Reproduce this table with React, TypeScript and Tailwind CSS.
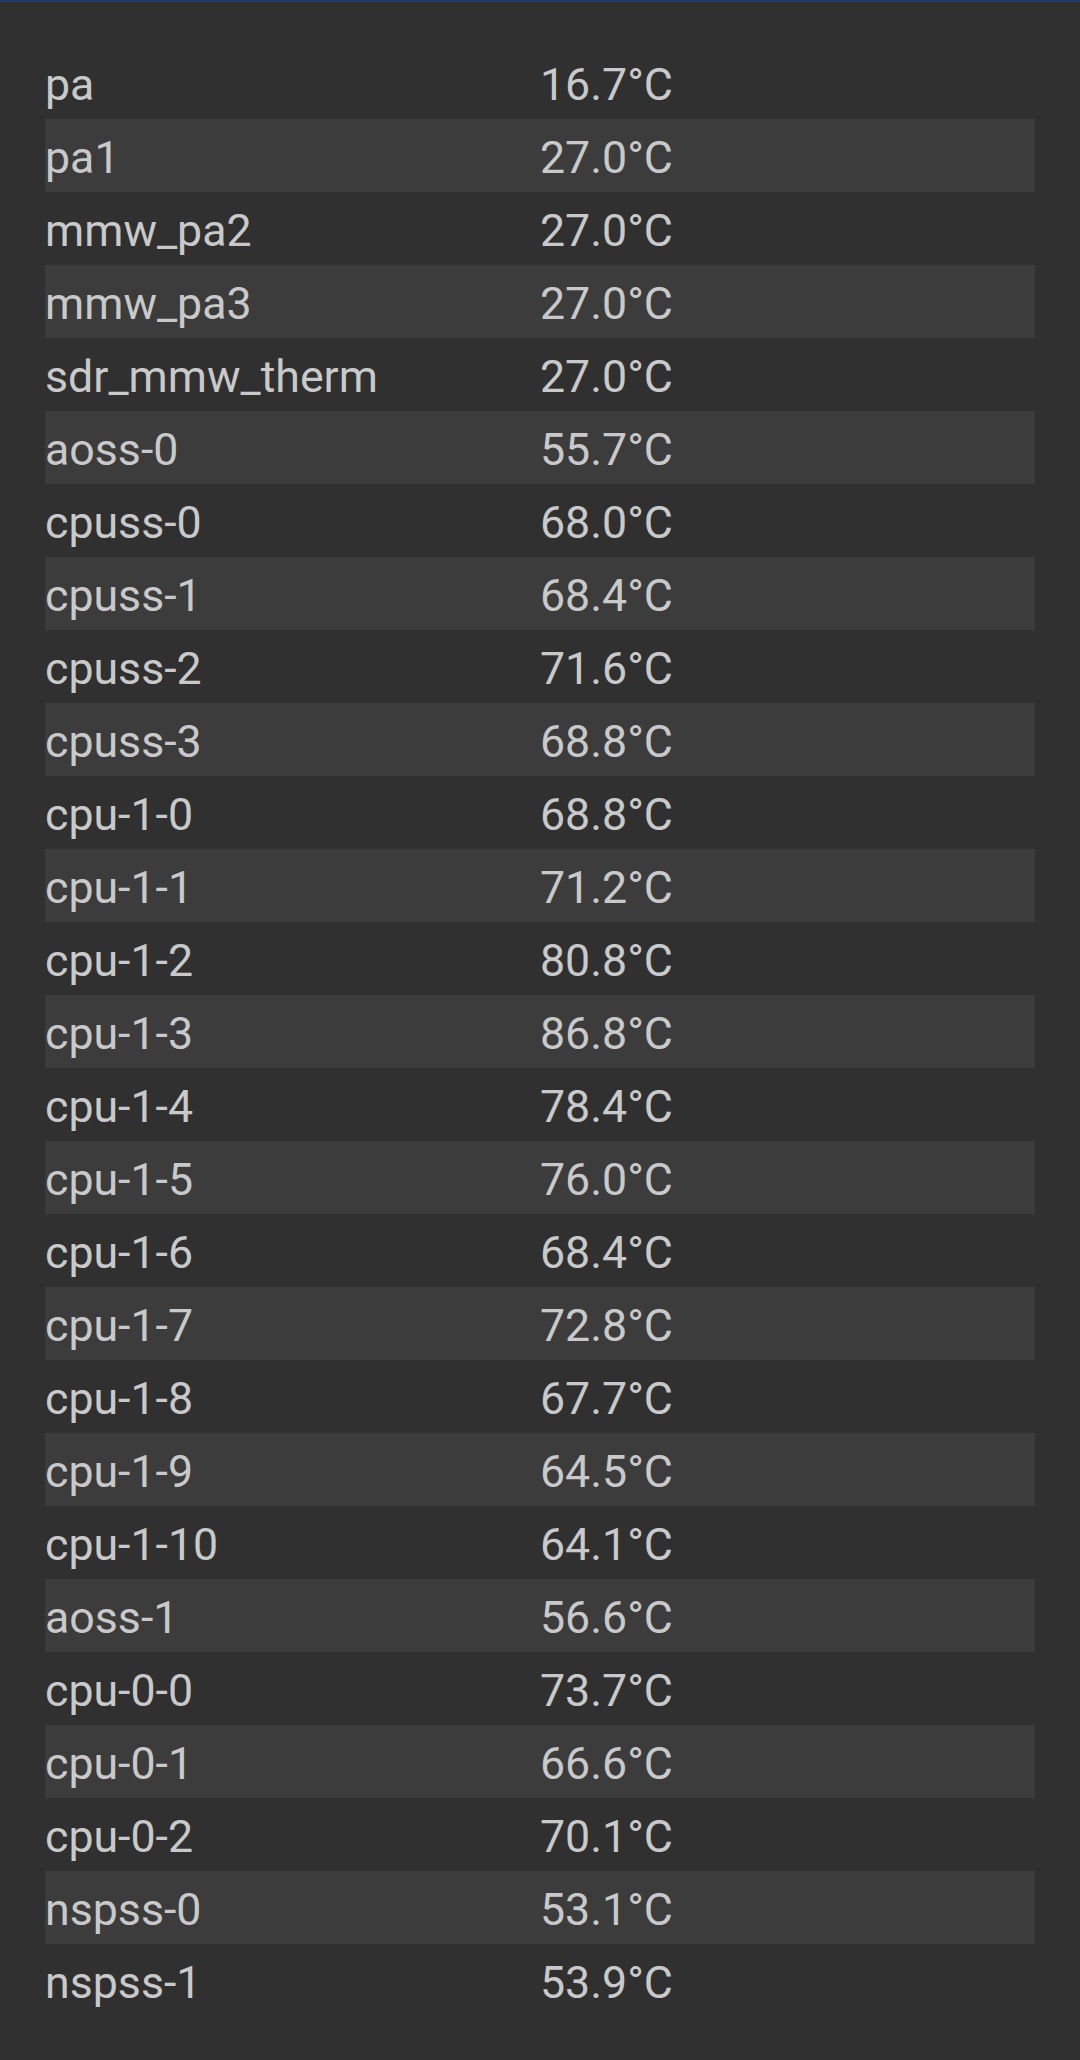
import React from "react";

const sensors: [string, string][] = [
   ["pa", "16.7°C"],
   ["pa1", "27.0°C"],
   ["mmw_pa2", "27.0°C"],
   ["mmw_pa3", "27.0°C"],
   ["sdr_mmw_therm", "27.0°C"],
   ["aoss-0", "55.7°C"],
   ["cpuss-0", "68.0°C"],
   ["cpuss-1", "68.4°C"],
   ["cpuss-2", "71.6°C"],
   ["cpuss-3", "68.8°C"],
   ["cpu-1-0", "68.8°C"],
   ["cpu-1-1", "71.2°C"],
   ["cpu-1-2", "80.8°C"],
   ["cpu-1-3", "86.8°C"],
   ["cpu-1-4", "78.4°C"],
   ["cpu-1-5", "76.0°C"],
   ["cpu-1-6", "68.4°C"],
   ["cpu-1-7", "72.8°C"],
   ["cpu-1-8", "67.7°C"],
   ["cpu-1-9", "64.5°C"],
   ["cpu-1-10", "64.1°C"],
   ["aoss-1", "56.6°C"],
   ["cpu-0-0", "73.7°C"],
   ["cpu-0-1", "66.6°C"],
   ["cpu-0-2", "70.1°C"],
   ["nspss-0", "53.1°C"],
   ["nspss-1", "53.9°C"],
];

const App = () => {
   return (
      <main
         className="w-[1080px] h-[2060px] bg-[#303030] border-t-2 border-[#1f3b6f] overflow-hidden"
         style={{ fontFamily: "Roboto, 'Noto Sans', sans-serif" }}
      >
         {/* thermal zone list */}
         <section className="pt-[44px] px-[45px]">
            {sensors.map(([name, temp], i) => (
               <div
                  key={name}
                  className={`flex h-[73px] pt-[6px] text-[44.7px] leading-[67px] text-[#c9c9c9] ${
                     i % 2 === 1 ? "bg-[#3c3c3c]" : ""
                  }`}
               >
                  <span className="w-[495px] shrink-0">{name}</span>
                  <span>{temp}</span>
               </div>
            ))}
         </section>
      </main>
   );
};

export default App;
